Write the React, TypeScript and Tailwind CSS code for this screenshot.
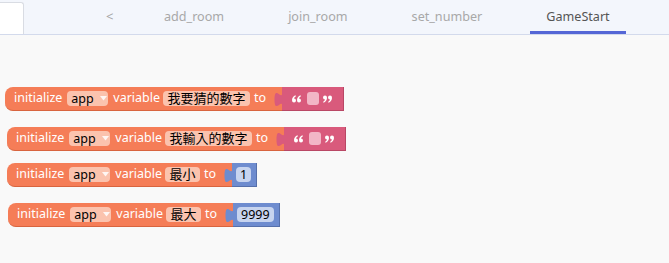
import React from "react";

const font = { fontFamily: '"Noto Sans", "Noto Sans CJK TC", sans-serif' };

const tabs = ["add_room", "join_room", "set_number", "GameStart"];

// Blockly-style output tab sticking out of a value block
const Tab = ({ color }: { color: string }) => (
  <svg
    className="absolute left-[-8px] top-[5px]"
    width="8"
    height="15"
    viewBox="0 0 8 15"
  >
    <path d="M8.5,0 c0,10 -8,-8 -8,7.5 s8,-2.5 8,7.5 Z" fill={color} />
  </svg>
);

// one "6"-shaped quote stroke, 4 wide, 7 tall
const Six = ({ x }: { x: number }) => (
  <g transform={`translate(${x},0)`}>
    <circle cx="2" cy="5.2" r="2" />
    <path d="M0.1,5 C0,2.6 1.3,0.9 3.5,0 L3.9,0.9 C2.6,1.7 2,2.8 2.1,3.6 Z" />
  </g>
);

const QuoteOpen = () => (
  <svg width="9" height="8" viewBox="0 0 9 7.5" fill="#ffffff">
    <Six x={0} />
    <Six x={5} />
  </svg>
);

const QuoteClose = () => (
  <svg width="9" height="8" viewBox="0 0 9 7.5" fill="#ffffff">
    <g transform="rotate(180 4.5 3.75)">
      <Six x={0} />
      <Six x={5} />
    </g>
  </svg>
);

const TextValue = () => (
  <div className="relative flex items-center h-[24px] w-[62px] bg-[#d95a7c] border-b border-r border-[#b94765] pl-[10px]">
    <Tab color="#d95a7c" />
    <QuoteOpen />
    <span className="ml-[6px] w-[12px] h-[13px] rounded-[3px] bg-[#f2b6c6]"></span>
    <span className="ml-[4px] flex">
      <QuoteClose />
    </span>
  </div>
);

const NumberValue = ({ value }: { value: string }) => (
  <div className="relative flex items-center h-[24px] bg-[#6e8ccf] border-b border-r border-[#5670ab] pl-[4px] pr-[5px]">
    <Tab color="#6e8ccf" />
    <span className="h-[15px] px-[4px] rounded-[4px] bg-[#c7d4ef] text-black text-[12.5px] leading-[15px]">
      {value}
    </span>
  </div>
);

const InitBlock = ({
  name,
  children,
}: {
  name: string;
  children: React.ReactNode;
}) => (
  <div className="flex items-start">
    <div className="flex items-center h-[24px] bg-[#f57d57] border-b border-[#d8643f] rounded-l-[8px] pl-[9px] text-white text-[12.5px]">
      <span>initialize</span>
      <span className="ml-[5px] flex items-center h-[15px] w-[41px] pl-[4px] rounded-[4px] bg-[#fbc3ae] text-black leading-[15px]">
        app
        <svg className="ml-[6px]" width="7" height="5" viewBox="0 0 7 5">
          <path d="M0,0 L7,0 L3.5,4.5 Z" fill="#ffffff" fillOpacity="0.85" />
        </svg>
      </span>
      <span className="ml-[5px]">variable</span>
      <span className="ml-[3px] h-[15px] px-[4.5px] rounded-[4px] bg-[#fbc3ae] text-black text-[13px] leading-[15px]">
        {name}
      </span>
      <span className="ml-[4px] w-[28px]">to</span>
    </div>
    {children}
  </div>
);

export default function App() {
  return (
    <div className="w-[669px] h-[263px] bg-[#f9f9f9] overflow-hidden" style={font}>
      {/* tab bar */}
      <div className="flex items-stretch h-[35px] bg-[#f3f6fc] border-b border-[#d3daec]">
        <div className="mt-[2px] w-[24px] bg-white border-r border-t border-[#d9dce3] rounded-tr-[3px]"></div>
        <div className="ml-[82px] flex items-center text-[#a5a5a5] text-[13px] w-[42px]">&lt;</div>
        <div className="flex gap-[32px]">
          {tabs.map((t) => (
            <div
              key={t}
              className={`relative flex items-center px-[16px] text-[12.6px] ${
                t === "GameStart" ? "text-[#555555]" : "text-[#a8a8a8]"
              }`}
            >
              {t}
              {t === "GameStart" && (
                <div className="absolute left-0 right-0 bottom-0 h-[3px] bg-[#5567d6]"></div>
              )}
            </div>
          ))}
        </div>
      </div>

      {/* workspace */}
      <div className="flex flex-col items-start">
        <div className="mt-[52px] ml-[5px]">
          <InitBlock name="我要猜的數字">
            <TextValue />
          </InitBlock>
        </div>
        <div className="mt-[16px] ml-[7px]">
          <InitBlock name="我輸入的數字">
            <TextValue />
          </InitBlock>
        </div>
        <div className="mt-[12px] ml-[7px]">
          <InitBlock name="最小">
            <NumberValue value="1" />
          </InitBlock>
        </div>
        <div className="mt-[16px] ml-[8px]">
          <InitBlock name="最大">
            <NumberValue value="9999" />
          </InitBlock>
        </div>
      </div>
    </div>
  );
}
